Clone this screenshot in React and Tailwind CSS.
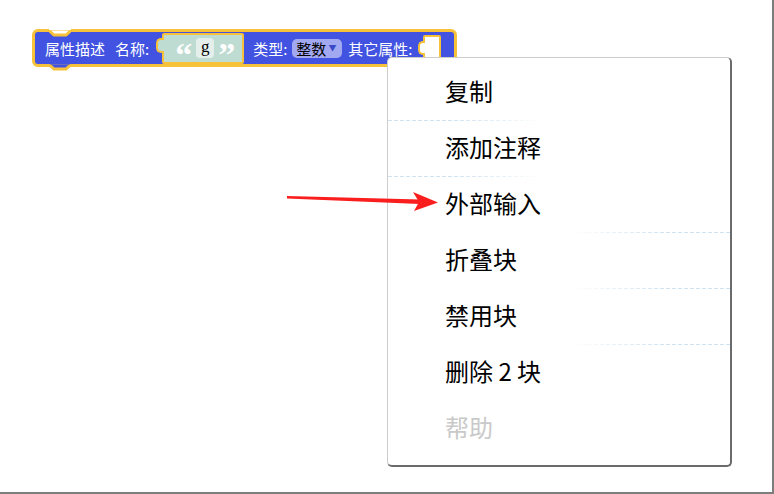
const CJK = "font-['Noto_Sans_CJK_SC','Noto_Sans',sans-serif]";

const MENU = [
  { label: "复制", sep: "left" },
  { label: "添加注释", sep: "left" },
  { label: "外部输入", sep: "right" },
  { label: "折叠块", sep: "right" },
  { label: "禁用块", sep: "right" },
  { label: "删除 2 块", sep: null },
  { label: "帮助", sep: null, disabled: true },
];

function Separator({ side }) {
  if (side === "left") {
    return (
      <div className="absolute bottom-0 left-0 h-px w-[160px] bg-[repeating-linear-gradient(90deg,#cfe2f2_0_4px,transparent_4px_6px)] [mask-image:linear-gradient(to_right,black_40%,transparent)]" />
    );
  }
  return (
    <div className="absolute bottom-0 right-0 h-px w-[160px] bg-[repeating-linear-gradient(90deg,#cfe2f2_0_4px,transparent_4px_6px)] [mask-image:linear-gradient(to_left,black_40%,transparent)]" />
  );
}

function AttrBlock() {
  return (
    <div className={`absolute left-[32px] top-[29px] ${CJK}`}>
      <div className="relative flex h-[38px] w-[425px] items-center rounded-[6px] border-[3px] border-[#f8c13a] bg-[#4153e0] pl-[10px] text-[15px] text-white">
        {/* top notch */}
        <svg className="absolute -top-[3px] left-[14px]" width="22" height="8" viewBox="0 0 22 8">
          <path d="M0 1.5 L5 6 L17 6 L22 1.5" fill="#fff" stroke="#f8c13a" strokeWidth="3" />
          <rect x="0" y="-2" width="22" height="3" fill="#fff" />
        </svg>
        <span className="leading-none">属性描述</span>
        <span className="ml-[10px] leading-none">名称:</span>

        {/* string block */}
        <div className="relative ml-[13px] flex h-[31px] w-[82px] items-center rounded-[2px] border-2 border-[#f8c13a] bg-[#bfdcd2] pl-[11px]">
          <div className="absolute -left-[8px] top-[3px] h-[15px] w-[8px] rounded-l-[5px] border-2 border-r-0 border-[#f8c13a] bg-[#bfdcd2]" />
          <span className="translate-y-[7px] font-['Liberation_Serif',serif] text-[34px] font-bold leading-none text-white">“</span>
          <span className="ml-[4px] flex h-[20px] w-[18px] items-center justify-center rounded-[4px] bg-[#e4efeb] pb-[3px] font-['Liberation_Serif',serif] text-[17px] leading-none text-black">g</span>
          <span className="ml-[4px] translate-y-[7px] font-['Liberation_Serif',serif] text-[34px] font-bold leading-none text-white">”</span>
        </div>

        <span className="ml-[9px] leading-none">类型:</span>
        <div className="ml-[5px] flex h-[19px] w-[50px] items-center rounded-[5px] bg-[#a3a9f1] pl-[4px] text-black">
          <span className="leading-none">整数</span>
          <span className="ml-[2px] text-[8px] leading-none text-[#3b49c9]">▼</span>
        </div>
        <span className="ml-[6px] leading-none">其它属性:</span>

        {/* empty input slot */}
        <div className="relative ml-[10px] mt-[3px] h-[29px] w-[18px] self-start rounded-[2px] border-2 border-[#f8c13a] bg-white">
          <div className="absolute -left-[7px] top-[4px] h-[14px] w-[7px] rounded-l-[5px] border-2 border-r-0 border-[#f8c13a] bg-white" />
        </div>

        {/* bottom bump */}
        <svg className="absolute -bottom-[8px] left-[14px]" width="22" height="8" viewBox="0 0 22 8">
          <path d="M0 0.5 L5 5 L17 5 L22 0.5" fill="#4153e0" stroke="#f8c13a" strokeWidth="3" />
          <rect x="1" y="-3" width="20" height="3.5" fill="#4153e0" />
        </svg>
      </div>
    </div>
  );
}

export default function App() {
  return (
    <div className="relative h-[494px] w-[774px] overflow-hidden border-b-2 border-r-2 border-[#7d7d7d] bg-white">
      <AttrBlock />

      {/* context menu */}
      <div
        className={`absolute left-[387px] top-[57px] h-[410px] w-[345px] rounded-[5px] border border-b-2 border-r-2 border-[#cdcdcd] border-b-[#6b6b6b] border-r-[#6b6b6b] bg-white pt-[7px] ${CJK}`}
      >
        {MENU.map((item) => (
          <div key={item.label} className="relative flex h-[56px] items-center pb-[4px] pl-[57px]">
            <span className={`text-[24px] leading-none ${item.disabled ? "text-[#c9c9c9]" : "text-black"}`}>
              {item.label}
            </span>
            {item.sep && <Separator side={item.sep} />}
          </div>
        ))}
      </div>

      {/* red pointer arrow */}
      <svg className="pointer-events-none absolute left-0 top-0" width="774" height="494">
        <polygon points="287,196 287,198.5 420,204 420,199.5" fill="#fb1e1e" />
        <polygon points="413,192 438,202.5 414,211 419,202" fill="#fb1e1e" />
      </svg>
    </div>
  );
}
